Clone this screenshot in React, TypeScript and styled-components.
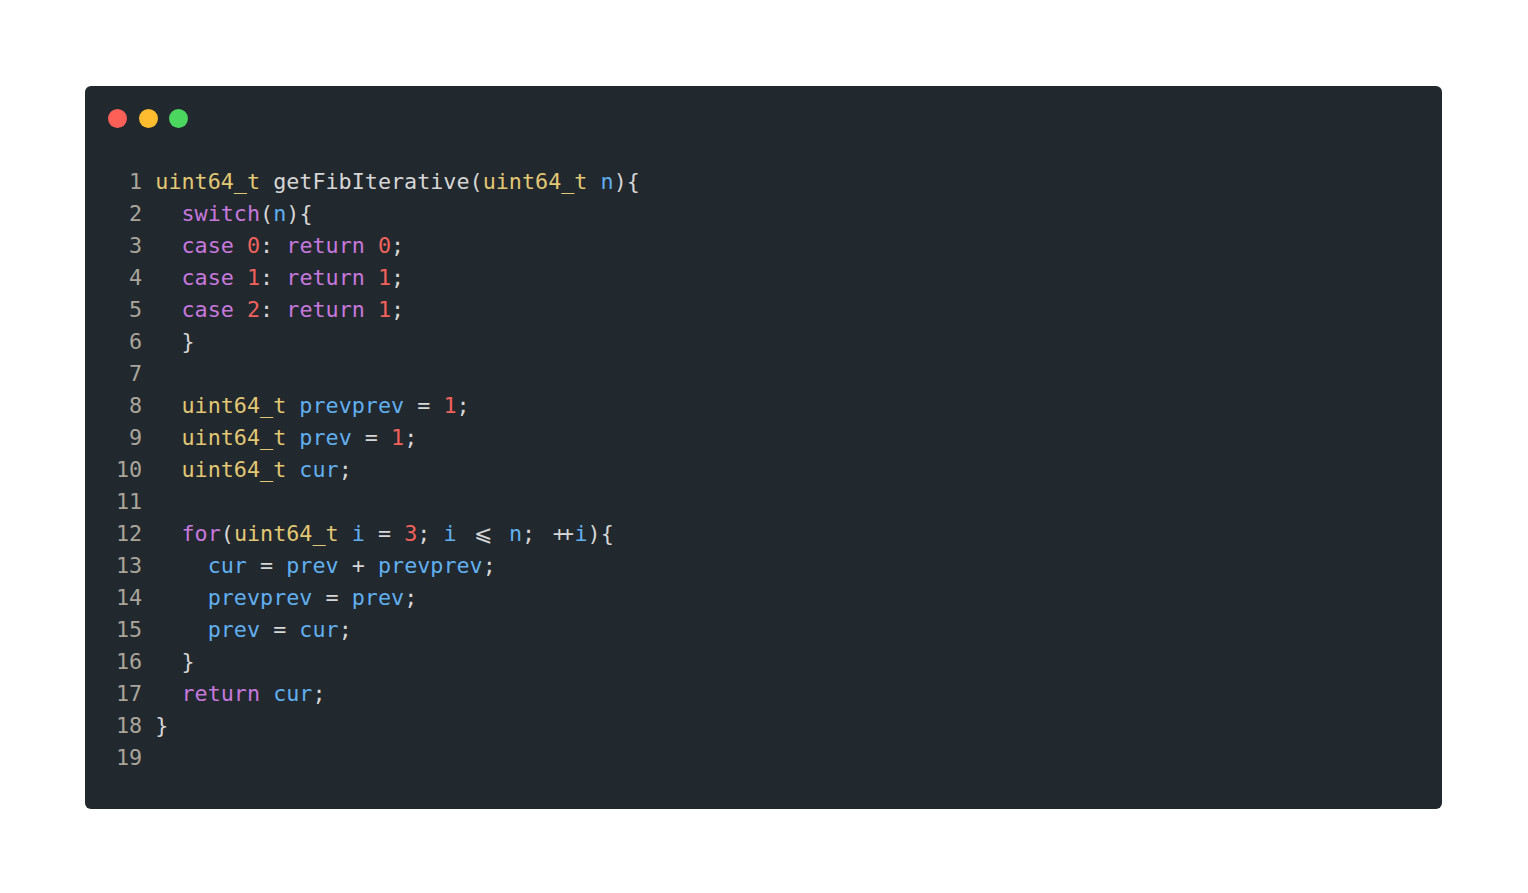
import React from "react";
import styled, { createGlobalStyle } from "styled-components";

const GlobalStyle = createGlobalStyle`
  html, body {
    margin: 0;
    padding: 0;
    background: #ffffff;
  }
  body {
    font-family: "DejaVu Sans Mono", monospace;
  }
`;

const Page = styled.div`
  padding: 86px 86px 85px 85px;
`;

const Window = styled.div`
  background: #21282e;
  border-radius: 6px;
  padding: 22.5px 0 35px 0;
  display: flex;
  flex-direction: column;
`;

const TitleBar = styled.div`
  display: flex;
  gap: 11.5px;
  padding-left: 23px;
  margin-bottom: 38.5px;
`;

const Dot = styled.span<{ $color: string }>`
  width: 19px;
  height: 19px;
  border-radius: 50%;
  background: ${(p) => p.$color};
`;

const Code = styled.div`
  display: flex;
  flex-direction: column;
  padding-left: 31px;
  font-family: "DejaVu Sans Mono", monospace;
  font-size: 21.75px;
  line-height: 32px;
  color: #d6d6d6;
`;

const Line = styled.div`
  display: flex;
  height: 32px;
`;

const LineNo = styled.span`
  width: 2ch;
  text-align: right;
  margin-right: 1ch;
  color: #a9a59b;
  flex: none;
`;

const Text = styled.span`
  white-space: pre;
`;

type Kind = "p" | "t" | "k" | "n" | "v" | "l" | "m";

const colors: Record<string, string> = {
  p: "#d6d6d6",
  t: "#e2c774",
  k: "#c678dd",
  n: "#f0625c",
  v: "#61afef",
};

const Tok = styled.span<{ $kind: Kind }>`
  color: ${(p) => colors[p.$kind]};
`;

const Lig = styled.span`
  display: inline-block;
  width: 2ch;
  text-align: center;
  color: #d6d6d6;
`;

const PlusLig = styled.span`
  display: inline-block;
  width: 2ch;
  color: #d6d6d6;
  letter-spacing: -0.22em;
  text-indent: 0.2em;
  overflow: visible;
`;

type T = [Kind, string];

const lines: T[][] = [
  [["t", "uint64_t"], ["p", " getFibIterative("], ["t", "uint64_t"], ["p", " "], ["v", "n"], ["p", "){"]],
  [["p", "  "], ["k", "switch"], ["p", "("], ["v", "n"], ["p", "){"]],
  [["p", "  "], ["k", "case"], ["p", " "], ["n", "0"], ["p", ": "], ["k", "return"], ["p", " "], ["n", "0"], ["p", ";"]],
  [["p", "  "], ["k", "case"], ["p", " "], ["n", "1"], ["p", ": "], ["k", "return"], ["p", " "], ["n", "1"], ["p", ";"]],
  [["p", "  "], ["k", "case"], ["p", " "], ["n", "2"], ["p", ": "], ["k", "return"], ["p", " "], ["n", "1"], ["p", ";"]],
  [["p", "  }"]],
  [],
  [["p", "  "], ["t", "uint64_t"], ["p", " "], ["v", "prevprev"], ["p", " = "], ["n", "1"], ["p", ";"]],
  [["p", "  "], ["t", "uint64_t"], ["p", " "], ["v", "prev"], ["p", " = "], ["n", "1"], ["p", ";"]],
  [["p", "  "], ["t", "uint64_t"], ["p", " "], ["v", "cur"], ["p", ";"]],
  [],
  [
    ["p", "  "], ["k", "for"], ["p", "("], ["t", "uint64_t"], ["p", " "], ["v", "i"], ["p", " = "], ["n", "3"],
    ["p", "; "], ["v", "i"], ["p", " "], ["l", "⩽"], ["p", " "], ["v", "n"], ["p", "; "], ["m", "++"], ["v", "i"], ["p", "){"],
  ],
  [["p", "    "], ["v", "cur"], ["p", " = "], ["v", "prev"], ["p", " + "], ["v", "prevprev"], ["p", ";"]],
  [["p", "    "], ["v", "prevprev"], ["p", " = "], ["v", "prev"], ["p", ";"]],
  [["p", "    "], ["v", "prev"], ["p", " = "], ["v", "cur"], ["p", ";"]],
  [["p", "  }"]],
  [["p", "  "], ["k", "return"], ["p", " "], ["v", "cur"], ["p", ";"]],
  [["p", "}"]],
  [],
];

export default function App() {
  return (
    <>
      <GlobalStyle />
      <Page>
        <Window>
          <TitleBar>
            <Dot $color="#fe5f57" />
            <Dot $color="#febc2e" />
            <Dot $color="#4bd65f" />
          </TitleBar>
          <Code>
            {lines.map((toks, i) => (
              <Line key={i}>
                <LineNo>{i + 1}</LineNo>
                <Text>
                  {toks.map(([k, s], j) =>
                    k === "l" ? (
                      <Lig key={j}>{s}</Lig>
                    ) : k === "m" ? (
                      <PlusLig key={j}>{s}</PlusLig>
                    ) : (
                      <Tok key={j} $kind={k}>
                        {s}
                      </Tok>
                    )
                  )}
                </Text>
              </Line>
            ))}
          </Code>
        </Window>
      </Page>
    </>
  );
}
